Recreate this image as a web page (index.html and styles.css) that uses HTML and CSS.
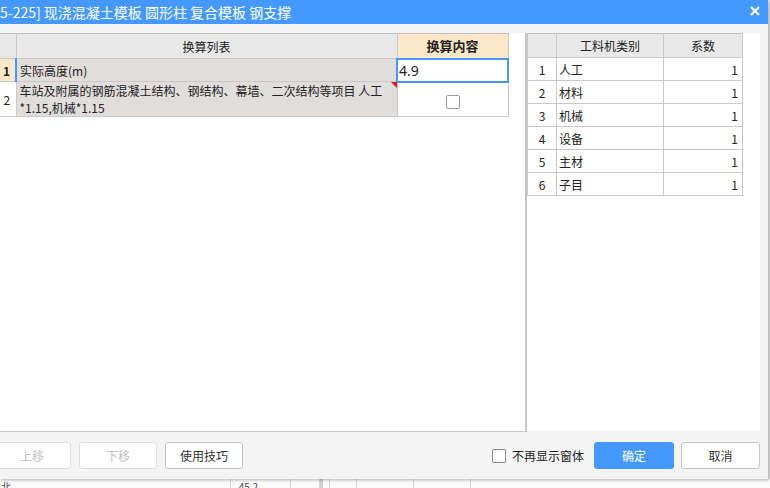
FILE: index.html
```html
<!DOCTYPE html>
<html lang="zh-CN">
<head>
    <meta charset="UTF-8">
    <title>换算</title>
    <link rel="stylesheet" href="styles.css">
</head>
<body>

<div class="dialog">
    <div class="titlebar">
        <span class="title">5-225] 现浇混凝土模板 圆形柱 复合模板 钢支撑</span>
        <svg class="close" viewBox="0 0 10 10"><path d="M1 1L9 9M9 1L1 9" stroke="#fff" stroke-width="2.2" /></svg>
    </div>

    <div class="panes">
        <div class="pane-left">
            <table class="grid conv">
                <colgroup><col class="c-num"><col class="c-list"><col class="c-value"></colgroup>
                <tr class="head">
                    <th class="num"></th>
                    <th>换算列表</th>
                    <th class="value-head">换算内容</th>
                </tr>
                <tr class="r1">
                    <td class="num current">1</td>
                    <td class="list">实际高度(m)</td>
                    <td class="editing">4.9</td>
                </tr>
                <tr class="r2">
                    <td class="num">2</td>
                    <td class="list marked">
                        <span class="line">车站及附属的钢筋混凝土结构、钢结构、幕墙、二次结构等项目 人工</span>
                        <span class="line">*1.15,机械*1.15</span>
                    </td>
                    <td class="check-cell"><span class="check"></span></td>
                </tr>
            </table>
        </div>
        <div class="splitter"></div>
        <div class="pane-right">
            <table class="grid coef">
                <colgroup><col class="k-num"><col class="k-name"><col class="k-val"></colgroup>
                <tr class="head"><th></th><th>工料机类别</th><th>系数</th></tr>
                <tr><td class="idx">1</td><td class="name">人工</td><td class="val">1</td></tr>
                <tr><td class="idx">2</td><td class="name">材料</td><td class="val">1</td></tr>
                <tr><td class="idx">3</td><td class="name">机械</td><td class="val">1</td></tr>
                <tr><td class="idx">4</td><td class="name">设备</td><td class="val">1</td></tr>
                <tr><td class="idx">5</td><td class="name">主材</td><td class="val">1</td></tr>
                <tr><td class="idx">6</td><td class="name">子目</td><td class="val">1</td></tr>
            </table>
        </div>
    </div>

    <div class="footer">
        <div class="left-btns">
            <button class="btn disabled first">上移</button>
            <button class="btn disabled">下移</button>
            <button class="btn">使用技巧</button>
        </div>
        <div class="spacer"></div>
        <label class="remember"><span class="check"></span>不再显示窗体</label>
        <button class="btn primary">确定</button>
        <button class="btn cancel">取消</button>
    </div>
</div>

<div class="under">
    <div class="u-cell" style="width: 231px">北</div>
    <div class="u-cell" style="width: 60px">   45.2</div>
    <div class="u-cell" style="width: 29px"></div>
    <div class="u-bar"></div>
    <div class="u-cell" style="width: 7px"></div>
    <div class="u-cell" style="width: 27px"></div>
    <div class="u-cell" style="width: 57px"></div>
    <div class="u-cell" style="width: 57px"></div>
</div>

</body>
</html>
```

FILE: styles.css
```css
* { box-sizing: border-box; }
:root {
    --blue: #4599fe;
    --grid: #c9c9c9;
    --head-bg: #e8e8e8;
    --peach: #fde7c9;
    --row-bg: #e1dddb;
}
body {
    margin: 0;
    background: #ececec;
    font-family: "Noto Sans CJK SC", "Noto Sans", sans-serif;
    font-size: 12px;
    color: #222;
    overflow: hidden;
}

.dialog {
    position: relative;
    z-index: 1;
    width: 768px;
    height: 479px;
    background: #f4f4f4;
    box-shadow: 1px 1px 3px rgba(0, 0, 0, 0.3);
    display: flex;
    flex-direction: column;
}

.titlebar {
    height: 24px;
    flex: none;
    background: var(--blue);
    color: #fff;
    display: flex;
    align-items: center;
    justify-content: space-between;
    padding-right: 8px;
}
.title {
    font-size: 14px;
    line-height: 24px;
    white-space: nowrap;
}
.close { width: 10px; height: 10px; margin-top: -3px; }

.panes {
    display: flex;
    height: 399px;
    flex: none;
    margin-top: 9px;
    padding-right: 8px;
}
.pane-left {
    width: 525px;
    background: #fff;
    border-bottom: 1px solid #c6c6c6;
}
.splitter { width: 2px; background: #c6c6c6; }
.pane-right {
    flex: 1;
    height: 398px;
    background: #fff;
}

.grid {
    border-collapse: collapse;
    table-layout: fixed;
}
.grid th, .grid td {
    border: 1px solid var(--grid);
    padding: 0;
    font-weight: normal;
    white-space: nowrap;
}
.grid th {
    background: var(--head-bg);
    font-size: 12px;
    color: #222;
}

/* left grid */
.conv { width: 508px; }
.conv .c-num { width: 16px; }
.conv .c-list { width: 381px; }
.conv .c-value { width: 111px; }
.conv tr > *:first-child { border-left: none; }
.conv tr.head > * { height: 25px; border-top-color: #c0c0c0; }
.conv tr.r1 > * { height: 23px; }
.conv tr.r2 > * { height: 35px; }
.conv .value-head {
    background: var(--peach);
    font-weight: bold;
    font-size: 13px;
}
.conv .num {
    text-align: center;
    font-size: 12px;
    padding-right: 2px;
}
.conv .num.current {
    background: var(--peach);
    font-weight: bold;
    border-right: 2px solid var(--blue);
}
.conv .list {
    background: var(--row-bg);
    padding-left: 3px;
    position: relative;
}
.conv .r2 .list {
    vertical-align: top;
    padding-top: 0;
}
.conv .line {
    display: block;
    line-height: 17px;
}
.conv .marked::after {
    content: "";
    position: absolute;
    top: 0;
    right: 0;
    border-top: 6px solid #f01010;
    border-left: 6px solid transparent;
}
.conv .editing {
    border: 2px solid var(--blue);
    font-family: "Noto Sans", sans-serif;
    font-size: 14px;
    padding-left: 1px;
}
.check-cell { text-align: center; }
.check-cell .check { vertical-align: middle; margin-top: 2px; }

.check {
    display: inline-block;
    width: 14px;
    height: 14px;
    border: 1px solid #999;
    border-radius: 2px;
    background: #fff;
}

/* right grid */
.coef { width: 215px; }
.coef .k-num { width: 29px; }
.coef .k-name { width: 107px; }
.coef .k-val { width: 79px; }
.coef tr > * { height: 23px; }
.coef tr.head > * { height: 24px; border-top-color: #c0c0c0; }
.coef .idx { text-align: center; }
.coef .name { padding-left: 2px; }
.coef .val { text-align: right; padding-right: 4px; }

/* footer */
.footer {
    flex: 1;
    display: flex;
    align-items: center;
    padding: 10px 8px 10px 0;
    height: 47px;
}
.left-btns {
    display: flex;
    gap: 8px;
}
.spacer { flex: 1; }
.btn {
    width: 78px;
    height: 27px;
    border: 1px solid #c4c4c4;
    border-radius: 3px;
    background: #fff;
    color: #333;
    font-family: "Noto Sans CJK SC", sans-serif;
    font-size: 12px;
    padding: 0;
}
.btn.first { margin-left: -7px; }
.btn.disabled {
    color: #c2c2c2;
    border-color: #dedede;
}
.btn.primary {
    width: 80px;
    background: var(--blue);
    border-color: var(--blue);
    color: #fff;
    margin-right: 7px;
}
.btn.cancel { width: 79px; }
.remember {
    display: flex;
    align-items: center;
    gap: 6px;
    font-size: 12px;
    color: #222;
    margin-right: 10px;
}
.remember .check { border-color: #888; }

/* window underneath */
.under {
    height: 9px;
    display: flex;
    background: #fafafa;
    overflow: hidden;
}
.u-cell {
    border-right: 1px solid #d6d6d6;
    padding: 2px 0 0 1px;
    line-height: 12px;
    font-size: 10px;
    color: #444;
    white-space: pre;
}
.u-bar { width: 3px; background: #cfcfcf; }
```
